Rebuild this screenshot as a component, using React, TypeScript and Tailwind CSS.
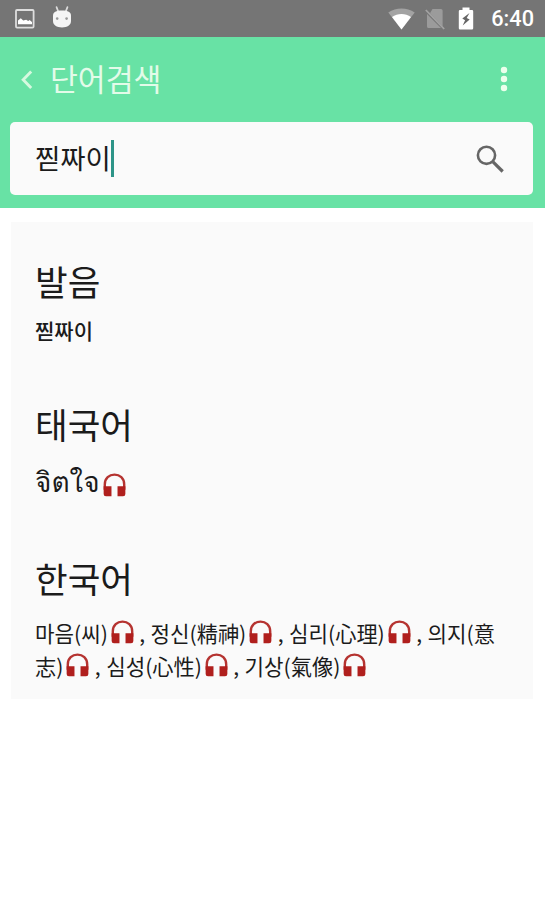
import type { ReactNode } from 'react';

interface Meaning {
  word: string;
  hanja: string;
}

const MEANINGS: Meaning[] = [
  { word: '마음', hanja: '씨' },
  { word: '정신', hanja: '精神' },
  { word: '심리', hanja: '心理' },
  { word: '의지', hanja: '意志' },
  { word: '심성', hanja: '心性' },
  { word: '기상', hanja: '氣像' },
];

function Headphones({ className }: { className: string }) {
  return (
    <svg viewBox="0 0 22 23" className={className}>
      <path d="M1.7 16v-5C1.7 5 6 1.6 11 1.6S20.3 5 20.3 11v5" fill="none" stroke="#b53330" strokeWidth="2.3" />
      <path d="M.6 12.6h7.5v9.7H2.8a2.2 2.2 0 0 1-2.2-2.2zM13.9 12.6h7.5v7.5a2.2 2.2 0 0 1-2.2 2.2h-5.3z" fill="#b01f1d" />
    </svg>
  );
}

function StatusBar() {
  return (
    <div className="flex h-[37px] items-center bg-[#757575] text-white">
      <svg viewBox="0 0 20 20" className="ml-[15px] h-5 w-5">
        <rect x="1" y="1" width="17.6" height="17.6" rx="1" fill="none" stroke="#dedede" strokeWidth="1.8" />
        <path d="M3 15.3v-3.8l2.8-2.2 2.4 2.2 3-.8 2 1.2 1.4-1 2.4 2.2v2.2z" fill="#fff" />
      </svg>
      <svg viewBox="0 0 20 22" className="mb-[3px] ml-[17px] h-[22px] w-5">
        <path d="M4.6 1.2 6.4 6M15.4 1.2 13.6 6" stroke="#dcdcdc" strokeWidth="1.8" strokeLinecap="round" />
        <path d="M1 9.5C1 6 4 4.4 10 4.4s9 1.6 9 5.1V15c0 4-3.6 6.4-9 6.4S1 19 1 15z" fill="#f5f5f5" />
        <circle cx="5.2" cy="12.6" r="1.3" fill="#999" />
        <circle cx="14.6" cy="12.6" r="1.3" fill="#999" />
      </svg>
      <svg viewBox="0 0 27 22" className="ml-auto h-[22px] w-[27px]">
        <path d="M.3 4.6C8-1 19-1 26.7 4.6L13.5 21.5z" fill="#a3a3a3" />
        <path d="M4 9.1c5.6-4.3 13.4-4.3 19 0l-9.5 12.4z" fill="#fff" />
      </svg>
      <svg viewBox="0 0 20 22" className="ml-[10px] h-[22px] w-5">
        <path d="M7.5 1H16a1.6 1.6 0 0 1 1.6 1.6v15.8L5 5.2zM2 6l14 14H3.6A1.6 1.6 0 0 1 2 18.4z" fill="#9b9b9b" />
        <path d="m.8 2 18.4 19" stroke="#a3a3a3" strokeWidth="1.7" />
      </svg>
      <svg viewBox="0 0 16 23" className="ml-[13px] h-[23px] w-4">
        <path d="M4.5.5h7V3H14a1.2 1.2 0 0 1 1.2 1.2v17A1.2 1.2 0 0 1 14 22.4H2a1.2 1.2 0 0 1-1.2-1.2v-17A1.2 1.2 0 0 1 2 3h2.5z" fill="#fff" />
        <path d="M11.5 6 4.3 11.6l2.8 1.6-2.4 5.3 7-6-3-1.6z" fill="#666" />
      </svg>
      <span className="mr-[11px] ml-[17px] font-[Roboto,sans-serif] text-[21.7px] leading-none font-medium">6:40</span>
    </div>
  );
}

function Section({ title, className, children }: { title: string; className: string; children: ReactNode }) {
  return (
    <section className={className}>
      <h2 className="text-[35.5px] leading-[48px] font-normal">{title}</h2>
      {children}
    </section>
  );
}

export default function App() {
  return (
    <div className="h-[900px] bg-white font-['Noto_Sans_CJK_KR',sans-serif] text-[#1b1b1b]">
      <StatusBar />
      <header className="h-[171px] bg-[#68e2a5] pr-3 pl-[10px]">
        <div className="flex h-[85px] items-center">
          <svg viewBox="0 0 12 20" className="ml-[11px] h-5 w-3">
            <path d="m10.2 1.6-8 8.2 8 8.2" fill="none" stroke="#d6f9df" strokeWidth="2.9" />
          </svg>
          <h1 className="mb-[3px] ml-[17px] text-[30.3px] leading-10 font-normal text-[#e3fbe9]">단어검색</h1>
          <svg viewBox="0 0 8 26" className="mr-[25px] mb-0.5 ml-auto h-[26px] w-2" fill="#ecffec">
            <circle cx="4" cy="4" r="3.2" />
            <circle cx="4" cy="13" r="3.2" />
            <circle cx="4" cy="22" r="3.2" />
          </svg>
        </div>
        <div className="flex h-[73px] items-center rounded-[5px] bg-[#fafafa] pr-[29px] pl-[25px]">
          <span className="mb-[3px] text-[27.5px] leading-9">찓짜이</span>
          <span className="h-[37px] w-[3px] bg-[#2d9488]" />
          <svg viewBox="0 0 28 28" className="ml-auto h-7 w-7" fill="none" stroke="#666">
            <circle cx="10.5" cy="10.3" r="8.6" strokeWidth="2.6" />
            <path d="m17 16.8 9.7 9.7" strokeWidth="3.2" />
          </svg>
        </div>
      </header>

      <main className="mt-[14px] mr-3 ml-[11px] h-[477px] bg-[#fafafa] pt-[35px] pr-6 pl-6">
        <Section title="발음" className="h-[143px]">
          <p className="text-[21px] leading-[50px] font-medium">찓짜이</p>
        </Section>
        <Section title="태국어" className="h-[154px]">
          <p className="flex items-center pt-0.5 font-[Waree,Garuda,Loma,'Noto_Sans_Thai_Looped','Noto_Sans_Thai',sans-serif] text-[28px] leading-[64px]">
            จิตใจ
            <Headphones className="mt-1.5 ml-[3px] h-6 w-[23px]" />
          </p>
        </Section>
        <Section title="한국어" className="">
          <p className="pt-[14px] text-[21.2px] leading-[33px] [word-spacing:0.7px]">
            {MEANINGS.map((m, i) => (
              <span key={m.word}>
                {`${i > 0 ? ' , ' : ''}${m.word}(${m.hanja})`}
                <Headphones className="ml-[3px] inline-block h-6 w-[23px] align-[-2px]" />
              </span>
            ))}
          </p>
        </Section>
      </main>
    </div>
  );
}
